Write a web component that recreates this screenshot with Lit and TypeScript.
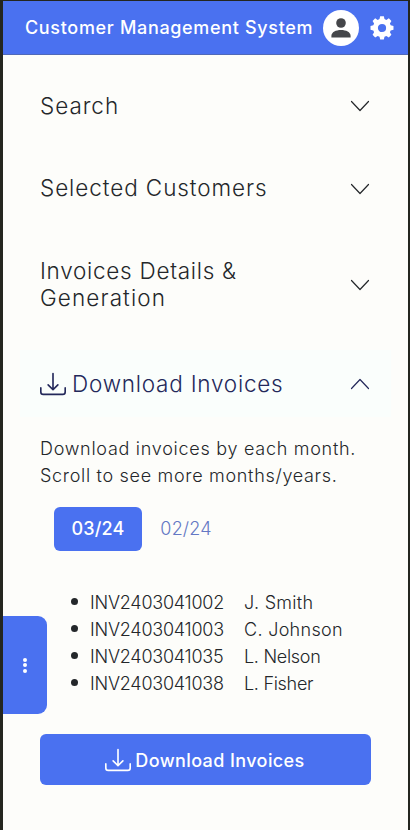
import { LitElement, html, css, svg } from "lit";
import { customElement } from "lit/decorators.js";
import { classMap } from "lit/directives/class-map.js";

const DOWNLOAD_PATHS = svg`
  <path d="M.5 9.9a.5.5 0 0 1 .5.5v2.5a1 1 0 0 0 1 1h12a1 1 0 0 0 1-1v-2.5a.5.5 0 0 1 1 0v2.5a2 2 0 0 1-2 2H2a2 2 0 0 1-2-2v-2.5a.5.5 0 0 1 .5-.5z"/>
  <path d="M7.646 11.854a.5.5 0 0 0 .708 0l3-3a.5.5 0 0 0-.708-.708L8.5 10.293V1.500a.5.5 0 0 0-1 0v8.793L5.354 8.146a.5.5 0 1 0-.708.708l3 3z"/>`;

const SECTIONS = [
  { lines: ["Search"], cls: "s1" },
  { lines: ["Selected Customers"], cls: "s2" },
  { lines: ["Invoices Details &", "Generation"], cls: "s3" },
];

const INVOICES = [
  ["INV2403041002", "J. Smith", "wide"],
  ["INV2403041003", "C. Johnson", "wide"],
  ["INV2403041035", "L. Nelson", "tight"],
  ["INV2403041038", "L. Fisher", "tight"],
];

@customElement("app-root")
export class AppRoot extends LitElement {
  static styles = css`
    :host {
      display: block;
      position: relative;
      box-sizing: border-box;
      height: 830px;
      overflow: hidden;
      border: solid #24261f;
      border-width: 1px 2px 0 3px;
      background: #fdfdfa;
      color: #24272a;
      font-family: Inter, "Open Sans", sans-serif;
      font-weight: 300;
    }
    svg { display: block; flex: none; }
    .bar {
      box-sizing: border-box;
      height: 54px;
      padding-left: 22px;
      display: flex;
      align-items: center;
      background: #4a71f0;
      border-bottom: 1px solid #5069b8;
      color: #fff;
    }
    .title {
      width: 298px;
      font-size: 18px;
      font-weight: 500;
      letter-spacing: 0.67px;
      white-space: nowrap;
    }
    .avatar {
      width: 36px;
      height: 36px;
      margin-right: 10px;
      border-radius: 50%;
      background: #fff;
      display: flex;
      align-items: center;
      justify-content: center;
    }
    .sections { padding: 17px 17px 0; }
    .head {
      box-sizing: border-box;
      min-height: 67px;
      margin-bottom: 16px;
      padding: 20px 21px 20px 20px;
      display: flex;
      align-items: center;
      justify-content: space-between;
      font-size: 22.5px;
      line-height: 27px;
      white-space: nowrap;
    }
    .line { display: block; width: max-content; }
    .s1 { letter-spacing: 0.95px; }
    .s2 { letter-spacing: 0.92px; }
    .s3 { height: 94px; letter-spacing: 0.72px; margin-bottom: 18px; }
    .s3 .line + .line { letter-spacing: 1.1px; }
    .s2 .text { margin-top: -2px; }
    .s3 .text { margin-top: -2px; margin-bottom: 1px; }
    .open {
      height: 67px;
      margin-bottom: 0;
      letter-spacing: 0.77px;
      background: #fafefc;
      color: #23285a;
    }
    .label { display: flex; align-items: center; gap: 6px; }
    .body { padding: 18px 37px 0; font-size: 18px; line-height: 27px; }
    .note { margin: 0; white-space: nowrap; }
    .n1 { letter-spacing: 0.72px; }
    .n2 { letter-spacing: 0.69px; }
    .tabs { display: flex; margin: 18px 0 0 14px; }
    .tab {
      height: 44px;
      line-height: 44px;
      width: 88px;
      text-align: center;
      border-radius: 6px;
      color: #6478c4;
      letter-spacing: 0.15px;
    }
    .tab.on { background: #4a71f0; color: #fff; font-weight: 500; }
    .list { margin: 38px 0 0; padding: 0 0 0 50px; list-style: none; }
    .row { display: flex; position: relative; height: 27px; white-space: nowrap; }
    .row::before {
      content: "";
      position: absolute;
      left: -19px;
      top: 9px;
      width: 7px;
      height: 7px;
      border-radius: 50%;
      background: #24272a;
    }
    .num { width: 154px; letter-spacing: -0.24px; }
    .wide { letter-spacing: 0.3px; }
    .tight { letter-spacing: -0.3px; }
    .cta {
      box-sizing: border-box;
      width: 331px;
      height: 51px;
      margin-top: 37px;
      padding-right: 1px;
      display: flex;
      align-items: center;
      justify-content: center;
      gap: 4px;
      border-radius: 6px;
      background: #4a71f0;
      color: #fff;
      font-weight: 500;
    }
    .cta-text { letter-spacing: 0.4px; padding-top: 1px; }
    .drawer {
      box-sizing: border-box;
      position: absolute;
      left: 0;
      top: 615px;
      width: 44px;
      height: 98px;
      padding-right: 1px;
      border-radius: 0 9px 9px 0;
      background: #4a71f0;
      display: flex;
      flex-direction: column;
      align-items: center;
      justify-content: center;
      gap: 1.5px;
    }
    .dot { width: 4px; height: 4px; border-radius: 50%; background: #fff; }
  `;

  private chevron(up = false) {
    return html`<svg width="20" height="12" viewBox="0 0 20 12" fill="none" stroke="currentColor" stroke-width="1.2" stroke-linecap="round" stroke-linejoin="round">
      <path d=${up ? "M1.500 10.500 10 1.500 18.500 10.500" : "M1.500 1.500 10 10.500 18.500 1.500"} /></svg>`;
  }

  private download() {
    return html`<svg width="26" height="26" viewBox="0 0 16 16" fill="currentColor">${DOWNLOAD_PATHS}</svg>`;
  }

  render() {
    return html`
      <header class="bar">
        <span class="title">Customer Management System</span>
        <span class="avatar">
          <svg width="20" height="20" viewBox="0 0 20 20" fill="#44464a">
            <circle cx="10" cy="5" r="4.800" />
            <path d="M.4 19.500v-1.500c0-4 4.500-6 9.600-6s9.600 2 9.600 6v1.500z" />
          </svg>
        </span>
        <svg width="26" height="26" viewBox="0 0 24 24" fill="#fff">
          <path fill-rule="evenodd" d="M10.300 1.200h3.400l.6 2.600 1.700.7 2.300-1.400 2.400 2.400-1.400 2.300.7 1.700 2.600.6v3.600l-2.600.6-.7 1.700 1.400 2.300-2.400 2.400-2.300-1.400-1.700.7-.6 2.600h-3.400l-.6-2.600-1.700-.7-2.300 1.400-2.400-2.400 1.400-2.300-.7-1.700-2.600-.6v-3.600l2.600-.6.7-1.700-1.400-2.300 2.400-2.400 2.300 1.400 1.700-.7zM12 8.200a3.800 3.800 0 1 0 0 7.600 3.800 3.800 0 0 0 0-7.600z" />
        </svg>
      </header>
      <div class="sections">
        ${SECTIONS.map(
          (s) => html`<div class=${classMap({ head: true, [s.cls]: true })}>
            <span class="text">${s.lines.map((l) => html`<span class="line">${l}</span>`)}</span>
            ${this.chevron()}
          </div>`
        )}
        <div class="head open">
          <span class="label">${this.download()}<span class="line">Download Invoices</span></span>
          ${this.chevron(true)}
        </div>
      </div>
      <section class="body">
        <p class="note"><span class="line n1">Download invoices by each month.</span><span class="line n2">Scroll to see more months/years.</span></p>
        <div class="tabs"><span class="tab on">03/24</span><span class="tab">02/24</span></div>
        <ul class="list">
          ${INVOICES.map(
            ([num, name, fit]) => html`<li class="row"><span class="num">${num}</span><span class=${fit}>${name}</span></li>`
          )}
        </ul>
        <div class="cta">${this.download()}<span class="cta-text">Download Invoices</span></div>
      </section>
      <div class="drawer"><i class="dot"></i><i class="dot"></i><i class="dot"></i></div>
    `;
  }
}
